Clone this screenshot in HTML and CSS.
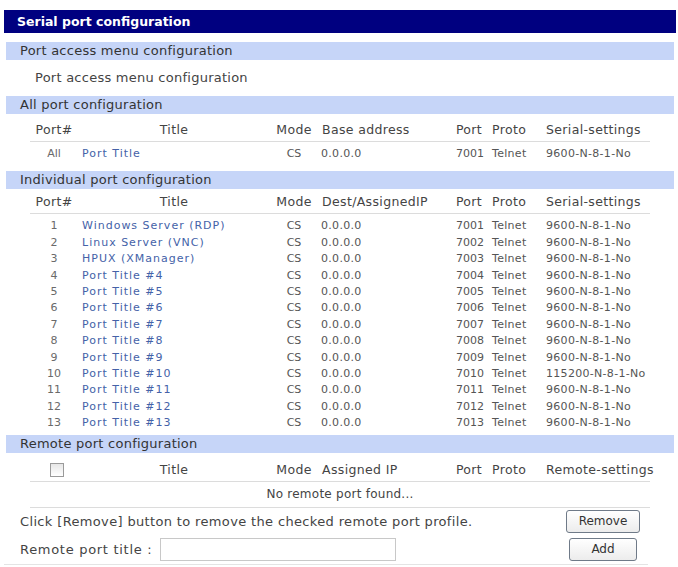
FILE: index.html
```html
<!DOCTYPE html>
<html lang="en">
<head>
    <meta charset="UTF-8">
    <title>Serial port configuration</title>
    <link rel="stylesheet" href="styles.css">
</head>
<body>
    <div class="panel">
        <div class="panel-title">Serial port configuration</div>

        <div class="section-head first">Port access menu configuration</div>
        <div class="menu-row">Port access menu configuration</div>

        <div class="section-head">All port configuration</div>
        <table class="ports all-ports">
            <colgroup>
                <col class="c-num"><col class="c-title"><col class="c-mode"><col class="c-addr">
                <col class="c-port"><col class="c-proto"><col class="c-serial">
            </colgroup>
            <tr>
                <th>Port#</th><th>Title</th><th>Mode</th><th class="left">Base address</th>
                <th>Port</th><th class="left">Proto</th><th class="left">Serial-settings</th>
            </tr>
            <tr>
                <td class="num">All</td><td><a href="#">Port Title</a></td><td class="mode">CS</td>
                <td>0.0.0.0</td><td class="port">7001</td><td>Telnet</td><td>9600-N-8-1-No</td>
            </tr>
        </table>

        <div class="section-head">Individual port configuration</div>
        <table class="ports indiv-ports">
            <colgroup>
                <col class="c-num"><col class="c-title"><col class="c-mode"><col class="c-addr">
                <col class="c-port"><col class="c-proto"><col class="c-serial">
            </colgroup>
            <thead>
                <tr>
                    <th>Port#</th><th>Title</th><th>Mode</th><th class="left">Dest/AssignedIP</th>
                    <th>Port</th><th class="left">Proto</th><th class="left">Serial-settings</th>
                </tr>
            </thead>
            <tbody id="portRows"></tbody>
        </table>

        <div class="section-head">Remote port configuration</div>
        <table class="ports remote-ports">
            <colgroup>
                <col class="c-num"><col class="c-title"><col class="c-mode"><col class="c-addr">
                <col class="c-port"><col class="c-proto"><col class="c-serial">
            </colgroup>
            <tr>
                <th><input type="checkbox" class="check"></th><th>Title</th><th>Mode</th>
                <th class="left">Assigned IP</th><th>Port</th><th class="left">Proto</th>
                <th class="left">Remote-settings</th>
            </tr>
            <tr class="empty-row">
                <td colspan="7">No remote port found...</td>
            </tr>
        </table>

        <div class="action-row">
            <span class="action-text">Click [Remove] button to remove the checked remote port profile.</span>
            <span class="btn-cell"><button class="btn btn-remove">Remove</button></span>
        </div>
        <div class="action-row last">
            <label class="field-label" for="remoteTitle">Remote port title :</label>
            <input type="text" id="remoteTitle" class="field-input">
            <span class="spacer"></span>
            <span class="btn-cell"><button class="btn btn-add">Add</button></span>
        </div>
    </div>

    <script>
        const ports = [
            'Windows Server (RDP)',
            'Linux Server (VNC)',
            'HPUX (XManager)',
            'Port Title #4', 'Port Title #5', 'Port Title #6', 'Port Title #7',
            'Port Title #8', 'Port Title #9', 'Port Title #10', 'Port Title #11',
            'Port Title #12', 'Port Title #13'
        ];

        const rows = document.getElementById('portRows');

        ports.forEach((title, i) => {
            const n = i + 1;
            const serial = n === 10 ? '115200-N-8-1-No' : '9600-N-8-1-No';
            const tr = document.createElement('tr');
            tr.innerHTML = `<td class="num">${n}</td><td><a href="#">${title}</a></td>` +
                `<td class="mode">CS</td><td>0.0.0.0</td><td class="port">${7000 + n}</td>` +
                `<td>Telnet</td><td>${serial}</td>`;
            rows.appendChild(tr);
        });
    </script>
</body>
</html>
```

FILE: styles.css
```css
body {
    margin: 0;
    background: #ffffff;
    font-family: "DejaVu Sans", Verdana, sans-serif;
    font-size: 12px;
    color: #3a3a3a;
}

.panel {
    margin: 10px 2px 0 4px;
}

.panel-title {
    height: 23px;
    line-height: 23px;
    padding-left: 13px;
    background: #000080;
    color: #ffffff;
    font-size: 12.5px;
    font-weight: bold;
}

.section-head {
    height: 18px;
    line-height: 18px;
    margin: 0 2px;
    padding-left: 14px;
    background: #c6d5f8;
    color: #333333;
    font-size: 13px;
    letter-spacing: 0.25px;
}

.section-head.first {
    margin-top: 9px;
}

.menu-row {
    height: 36px;
    line-height: 36px;
    padding-left: 31px;
    color: #444444;
    font-size: 13px;
    letter-spacing: 0.25px;
}

.ports {
    width: 620px;
    margin-left: 26px;
    border-collapse: collapse;
    table-layout: fixed;
    font-size: 11px;
}

.c-num { width: 48px; }
.c-title { width: 192px; }
.c-mode { width: 48px; }
.c-addr { width: 132px; }
.c-port { width: 38px; }
.c-proto { width: 52px; }
.c-serial { width: 110px; }

.ports th {
    font-weight: normal;
    font-size: 12.5px;
    letter-spacing: 0.35px;
    line-height: 15px;
    text-align: center;
    color: #444444;
    white-space: nowrap;
    border-bottom: 1px solid #dcdcdc;
    padding: 8px 0 4px;
}

.ports th.left {
    text-align: left;
    padding-left: 4px;
}

.ports th:last-child {
    padding-left: 6px;
}

.ports td {
    padding: 0 0 0 4px;
    line-height: 16.4px;
    color: #555555;
    letter-spacing: 0.3px;
    white-space: nowrap;
}

.ports td:nth-child(4) {
    padding-left: 3px;
}

.ports td:last-child {
    padding-left: 6px;
}

.ports td.num,
.ports td.mode,
.ports td.port {
    text-align: center;
    padding-left: 0;
    letter-spacing: 0;
}

.ports td.port {
    padding-left: 2px;
}

.ports td.num {
    color: #6a6a6a;
}

.ports a {
    color: #4462a8;
    letter-spacing: 1px;
    text-decoration: none;
}

.all-ports td {
    padding-top: 4px;
    padding-bottom: 4px;
}

.all-ports {
    margin-bottom: 5px;
}

.indiv-ports th {
    padding: 5px 0 4px;
}

.indiv-ports th.left {
    padding-left: 4px;
}

.indiv-ports th:last-child {
    padding-left: 6px;
}

.indiv-ports tbody tr:first-child td {
    padding-top: 4px;
}

.indiv-ports {
    margin-bottom: 3px;
}

.remote-ports th {
    padding-top: 9px;
    padding-bottom: 4px;
}

.check {
    appearance: none;
    width: 14px;
    height: 14px;
    margin: 0 0 0 6px;
    vertical-align: middle;
    border: 1px solid #9a9a9a;
    background: linear-gradient(#e6e6e6, #ffffff);
}

.remote-ports .empty-row td {
    text-align: center;
    padding: 5px 0;
    line-height: 15px;
    font-size: 12px;
    letter-spacing: 0.25px;
    color: #444444;
    border-bottom: 1px solid #dcdcdc;
}

.action-row {
    display: flex;
    align-items: center;
    height: 26px;
    padding-left: 16px;
    margin-right: 28px;
    font-size: 13px;
    color: #444444;
}

.action-row.last {
    height: 30px;
    border-bottom: 1px solid #e4e4e4;
}

.action-text {
    flex: 1;
    letter-spacing: 0.35px;
}

.spacer {
    flex: 1;
}

.field-label {
    width: 140px;
    letter-spacing: 0.7px;
}

.field-input {
    width: 236px;
    height: 23px;
    box-sizing: border-box;
    border: 1px solid #c8c8c8;
    margin: 0;
}

.btn-cell {
    width: 90px;
    display: flex;
    justify-content: center;
}

.btn {
    height: 23px;
    font-family: "DejaVu Sans", Verdana, sans-serif;
    font-size: 12px;
    color: #333333;
    background: linear-gradient(#ffffff, #ececec);
    border: 1px solid #6f7a88;
    border-radius: 3px;
    padding: 0;
}

.btn-remove {
    width: 74px;
}

.btn-add {
    width: 68px;
}
```
